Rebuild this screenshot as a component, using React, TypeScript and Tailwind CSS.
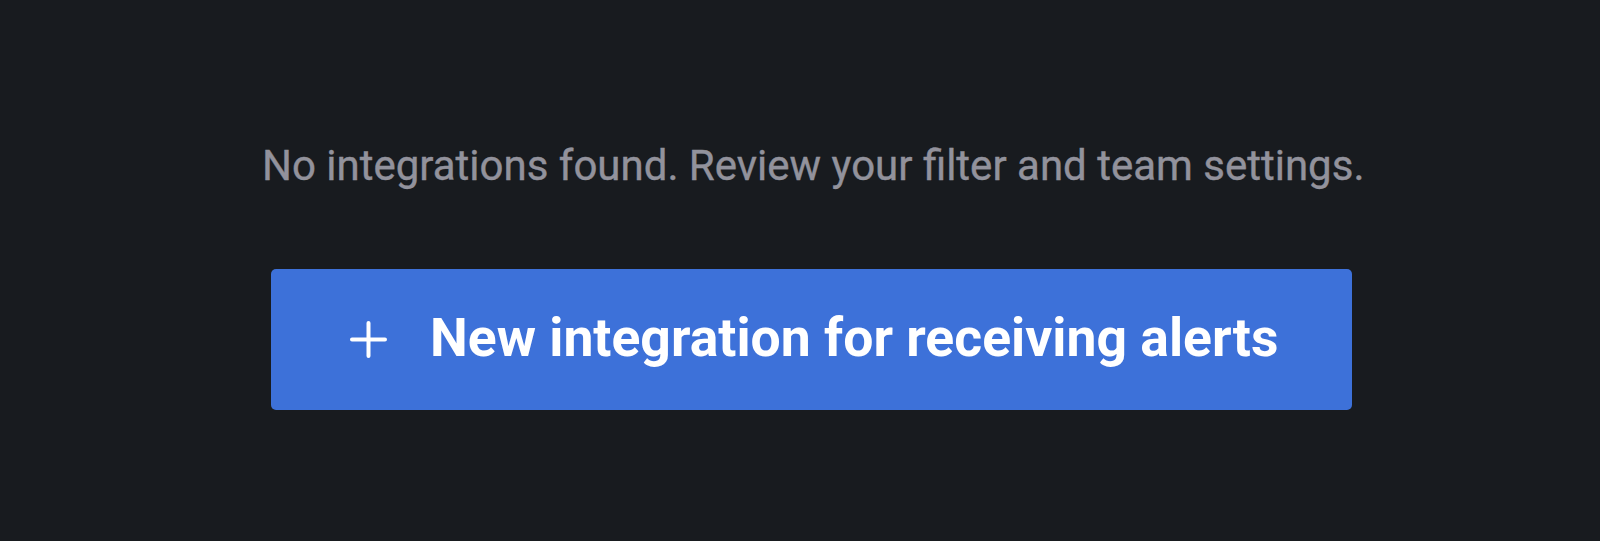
const PlusIcon = () => (
    <svg width="37" height="37" viewBox="0 0 37 37" fill="none" className="shrink-0">
        <path d="M18.5 2v33M2 18.5h33" stroke="currentColor" strokeWidth="4" strokeLinecap="round"/>
    </svg>
);

const App = () => {
    return (
        <div className="w-[1600px] h-[541px] bg-[#181b1f] font-['Roboto',sans-serif] flex flex-col items-start pl-[262px] pt-[138px]">
            <div className="text-[42px] leading-[56px] text-[#92929c] [-webkit-text-stroke:0.4px_#92929c]">
                No integrations found. Review your filter and team settings.
            </div>
            <button
                className="ml-[9px] mt-[75px] w-[1081px] h-[141px] rounded-[5px] bg-[#3d71d9] text-white flex items-center pl-[79px] gap-[43px]"
            >
                <PlusIcon/>
                <span className="text-[53.5px] font-bold leading-none -mt-[3px]">New integration for receiving alerts</span>
            </button>
        </div>
    );
};

export default App;
